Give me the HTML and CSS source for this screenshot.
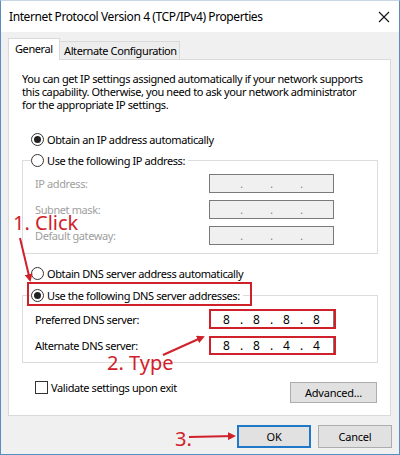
FILE: index.html
```html
<!DOCTYPE html>
<html lang="en">
<head>
  <meta charset="UTF-8" />
  <title>Internet Protocol Version 4 (TCP/IPv4) Properties</title>
  <link rel="stylesheet" href="styles.css">
</head>
<body>
  <div class="window">
    <div class="titlebar">
      <span class="title">Internet Protocol Version 4 (TCP/IPv4) Properties</span>
      <svg class="close" width="12" height="12" viewBox="0 0 12 12">
        <path d="M1 1L11 11M11 1L1 11" stroke="#111" stroke-width="1.1" fill="none" />
      </svg>
    </div>

    <div class="main">
      <div class="tabs">
        <div class="tab active">General</div>
        <div class="tab">Alternate Configuration</div>
      </div>

      <div class="panel">
        <p class="intro">You can get IP settings assigned automatically if your network supports<br>this capability. Otherwise, you need to ask your network administrator<br>for the appropriate IP settings.</p>

        <div class="option first"><span class="radio checked"></span>Obtain an IP address automatically</div>

        <fieldset class="group">
          <legend><span class="option"><span class="radio"></span>Use the following IP address:</span></legend>
          <div class="field disabled">
            <label>IP address:</label>
            <div class="ip"><span></span><i>.</i><span></span><i>.</i><span></span><i>.</i><span></span></div>
          </div>
          <div class="field disabled">
            <label>Subnet mask:</label>
            <div class="ip"><span></span><i>.</i><span></span><i>.</i><span></span><i>.</i><span></span></div>
          </div>
          <div class="field disabled">
            <label>Default gateway:</label>
            <div class="ip"><span></span><i>.</i><span></span><i>.</i><span></span><i>.</i><span></span></div>
          </div>
        </fieldset>

        <div class="option dns-auto"><span class="radio"></span>Obtain DNS server address automatically</div>

        <fieldset class="group dns">
          <legend><span class="option"><span class="radio checked"></span>Use the following DNS server addresses:</span></legend>
          <div class="field">
            <label>Preferred DNS server:</label>
            <div class="ip"><span>8</span><i>.</i><span>8</span><i>.</i><span>8</span><i>.</i><span>8</span></div>
          </div>
          <div class="field">
            <label>Alternate DNS server:</label>
            <div class="ip"><span>8</span><i>.</i><span>8</span><i>.</i><span>4</span><i>.</i><span>4</span></div>
          </div>
        </fieldset>

        <div class="bottom-row">
          <div class="option check-row"><span class="checkbox"></span>Validate settings upon exit</div>
          <button class="btn advanced">Advanced...</button>
        </div>
      </div>

      <div class="footer">
        <button class="btn ok">OK</button>
        <button class="btn">Cancel</button>
      </div>
    </div>

    <!-- red annotations drawn over the dialog -->
    <svg class="marks" width="400" height="455" viewBox="0 0 400 455">
      <defs>
        <marker id="head" markerWidth="8" markerHeight="8" refX="6" refY="4" orient="auto" markerUnits="userSpaceOnUse">
          <path d="M0 0L8 4L0 8Z" fill="#d0212a" />
        </marker>
      </defs>
      <rect x="28" y="283" width="223" height="22" />
      <rect x="210" y="310" width="125" height="18" />
      <rect x="210" y="337" width="125" height="17" />
      <line x1="20" y1="238" x2="30" y2="280" marker-end="url(#head)" />
      <line x1="163" y1="355" x2="203" y2="337" marker-end="url(#head)" />
      <line x1="189" y1="437" x2="234" y2="436" marker-end="url(#head)" />
    </svg>
    <div class="note note-click">1. Click</div>
    <div class="note note-type">2. Type</div>
    <div class="note note-ok">3.</div>
  </div>
</body>
</html>
```

FILE: styles.css
```css
body {
  margin: 0;
  font-family: 'Noto Sans', sans-serif;
  font-size: 11px;
  letter-spacing: -0.4px;
  color: #000;
  background: #fff;
}

.window {
  position: relative;
  width: 400px;
  height: 455px;
  box-sizing: border-box;
  border: 1px solid #5a8cc4;
  border-top-color: #c9d6e4;
  background: #f0f0f0;
  overflow: hidden;
}

.titlebar {
  height: 31px;
  background: #fff;
  display: flex;
  align-items: center;
  justify-content: space-between;
  padding: 0 9px 0 8px;
}

.title {
  font-size: 12px;
  letter-spacing: -0.4px;
}

.main {
  padding: 6px 8px 0 7px;
}

/* tabs */
.tabs {
  display: flex;
  align-items: flex-end;
  height: 21px;
  white-space: nowrap;
}

.tab {
  box-sizing: border-box;
  height: 18px;
  width: 120px;
  border: 1px solid #d9d9d9;
  border-left: none;
  border-bottom: none;
  background: #ededed;
  padding-left: 4px;
  line-height: 17px;
}

.tab.active {
  position: relative;
  z-index: 1;
  width: 52px;
  height: 22px;
  margin-bottom: -1px;
  border-left: 1px solid #d9d9d9;
  background: #fff;
  padding-left: 6px;
  line-height: 19px;
}

.panel {
  box-sizing: border-box;
  height: 357px;
  border: 1px solid #d9d9d9;
  background: #fff;
  padding: 0 12px 0 13px;
}

.intro {
  margin: 12px 0 0;
  line-height: 13px;
  white-space: nowrap;
}

/* radio / checkbox rows */
.option {
  display: flex;
  align-items: center;
  height: 16px;
  white-space: nowrap;
}

.option.first {
  margin: 20px 0 0 9px;
}

.option.dns-auto {
  margin: 11px 0 0 9px;
}

.radio {
  box-sizing: border-box;
  width: 13px;
  height: 13px;
  border: 1px solid #333;
  border-radius: 50%;
  margin-right: 3px;
  position: relative;
  background: #fff;
}

.radio.checked::after {
  content: "";
  position: absolute;
  left: 2px;
  top: 2px;
  width: 7px;
  height: 7px;
  border-radius: 50%;
  background: #222;
}

.checkbox {
  box-sizing: border-box;
  width: 13px;
  height: 13px;
  border: 1px solid #333;
  margin-right: 3px;
  background: #fff;
}

/* group boxes */
.group {
  margin: 5px 0 0;
  padding: 6px 0 8px 8px;
  border: 1px solid #dcdcdc;
  min-width: 0;
}

.group.dns {
  margin-top: 6px;
  padding-top: 7px;
  padding-bottom: 7px;
}

.group legend {
  padding: 0 3px 0 0;
}

.field {
  display: flex;
  align-items: center;
  height: 19px;
  padding-left: 4px;
}

.field + .field {
  margin-top: 7px;
}

.field label {
  width: 174px;
}

.field.disabled label {
  color: #a0a0a0;
}

.ip {
  box-sizing: border-box;
  width: 125px;
  height: 19px;
  border: 1px solid #7a7a7a;
  background: #fff;
  display: flex;
  align-items: center;
  padding-left: 5px;
  font-size: 12px;
  letter-spacing: 0;
}

.field.disabled .ip {
  background: #f0f0f0;
  color: #777;
  font-size: 10px;
}

.ip span {
  width: 23px;
  text-align: center;
}

.ip i {
  font-style: normal;
  width: 7px;
  text-align: center;
}

.bottom-row {
  display: flex;
  justify-content: space-between;
  align-items: flex-start;
  margin-top: 18px;
}

.check-row {
  height: 13px;
  padding-left: 13px;
}

/* buttons */
.btn {
  font-family: 'Noto Sans', sans-serif;
  font-size: 11px;
  letter-spacing: -0.2px;
  color: #000;
  box-sizing: border-box;
  width: 74px;
  height: 23px;
  padding: 0;
  border: 1px solid #adadad;
  background: #e1e1e1;
}

.btn.advanced {
  width: 87px;
  height: 21px;
  margin: 1px 1px 0 0;
}

.footer {
  display: flex;
  justify-content: flex-end;
  gap: 7px;
  padding-top: 9px;
  margin-right: -1px;
}

.btn.ok {
  border: 2px solid #1f78c8;
}

/* annotations */
.marks {
  position: absolute;
  left: -1px;
  top: -1px;
  pointer-events: none;
}

.marks rect {
  fill: none;
  stroke: #d0212a;
  stroke-width: 2;
}

.marks line {
  stroke: #d0212a;
  stroke-width: 2;
}

.note {
  position: absolute;
  color: #d0212a;
  font-size: 20px;
  letter-spacing: 0;
  line-height: 24px;
  white-space: nowrap;
}

.note-click {
  left: 12px;
  top: 210px;
}

.note-type {
  left: 106px;
  top: 350px;
}

.note-ok {
  left: 174px;
  top: 426px;
}
```
